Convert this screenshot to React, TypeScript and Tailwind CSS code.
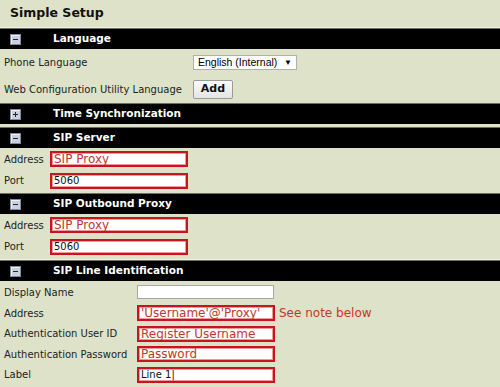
import { ReactNode } from "react";

const font = { fontFamily: '"DejaVu Sans", Verdana, sans-serif' };

function ToggleIcon({ open }: { open: boolean }) {
  return (
    <span className="relative inline-block w-[11px] h-[11px] bg-[#c9d1de] border border-[#7d8aa3] shadow-[inset_1px_1px_0_#eef2f8]">
      <span className="absolute left-[2px] top-[4px] w-[5px] h-[1px] bg-[#223]" />
      {!open && <span className="absolute left-[4px] top-[2px] w-[1px] h-[5px] bg-[#223]" />}
    </span>
  );
}

function Bar({ title, open = true }: { title: string; open?: boolean }) {
  return (
    <div className="flex items-center h-[21px] bg-black border-t border-[#6b6e60] text-white font-bold text-[10.5px]">
      <div className="w-[53px] pl-[10px] flex items-center">
        <ToggleIcon open={open} />
      </div>
      <span>{title}</span>
    </div>
  );
}

function RedInput({ value, hint, w = "w-[138px]" }: { value: string; hint?: boolean; w?: string }) {
  return (
    <div
      className={`${w} h-[16px] bg-white border-2 border-[#c8141e] shadow-[inset_0_0_0_1px_#ec9a9a] flex items-center pl-[2px] overflow-hidden whitespace-nowrap ${
        hint ? "text-[#c0392b] text-[12px]" : "text-[#111] text-[10px]"
      }`}
    >
      {value}
    </div>
  );
}

function Row({ label, labelW, h, children }: { label: string; labelW: string; h: string; children: ReactNode }) {
  return (
    <div className={`flex items-center ${h} pl-[4px]`}>
      <span className={`${labelW} shrink-0`}>{label}</span>
      {children}
    </div>
  );
}

export default function App() {
  return (
    <div style={font} className="w-[500px] h-[387px] bg-[#dee2c8] text-[#222] text-[10px] overflow-hidden">
      <div className="h-[28px] flex items-center pl-[10px] font-bold text-[12.5px] text-[#111] border-b border-[#f1f3e6]">
        Simple Setup
      </div>

      <Bar title="Language" />
      <Row label="Phone Language" labelW="w-[189px]" h="h-[27px]">
        <div className="w-[104px] h-[15px] bg-white border border-[#b0b0b0] flex items-center justify-between px-[4px] text-[10.5px] text-black" style={{ fontFamily: '"Liberation Sans", Arial, sans-serif' }}>
          <span>English (Internal)</span>
          <span className="text-[8px]">▼</span>
        </div>
      </Row>
      <Row label="Web Configuration Utility Language" labelW="w-[189px]" h="h-[27px]">
        <button className="w-[40px] h-[19px] bg-gradient-to-b from-[#fbfbfb] to-[#e4e4e4] border border-[#9a9a9a] rounded-[2px] font-bold text-[11px] text-[#111]">
          Add
        </button>
      </Row>

      <Bar title="Time Synchronization" open={false} />
      <div className="h-[3px]" />

      <Bar title="SIP Server" />
      <Row label="Address" labelW="w-[46px]" h="h-[22px]">
        <RedInput value="SIP Proxy" hint />
      </Row>
      <Row label="Port" labelW="w-[46px]" h="h-[21px]">
        <RedInput value="5060" />
      </Row>
      <div className="h-[2px]" />

      <Bar title="SIP Outbound Proxy" />
      <Row label="Address" labelW="w-[46px]" h="h-[22px]">
        <RedInput value="SIP Proxy" hint />
      </Row>
      <Row label="Port" labelW="w-[46px]" h="h-[21px]">
        <RedInput value="5060" />
      </Row>
      <div className="h-[3px] border-b border-[#f1f3e6]" />

      <Bar title="SIP Line Identification" />
      <Row label="Display Name" labelW="w-[133px]" h="h-[22px]">
        <div className="w-[137px] h-[14px] bg-white border border-[#a8a8a8]" />
      </Row>
      <Row label="Address" labelW="w-[133px]" h="h-[20px]">
        <RedInput value="'Username'@'Proxy'" hint w="w-[138px]" />
        <span className="ml-[4px] text-[12px] text-[#c0392b]">See note below</span>
      </Row>
      <Row label="Authentication User ID" labelW="w-[133px]" h="h-[21px]">
        <RedInput value="Register Username" hint w="w-[138px]" />
      </Row>
      <Row label="Authentication Password" labelW="w-[133px]" h="h-[20px]">
        <RedInput value="Password" hint w="w-[138px]" />
      </Row>
      <Row label="Label" labelW="w-[133px]" h="h-[21px]">
        <RedInput value="Line 1|" w="w-[138px]" />
      </Row>
    </div>
  );
}
